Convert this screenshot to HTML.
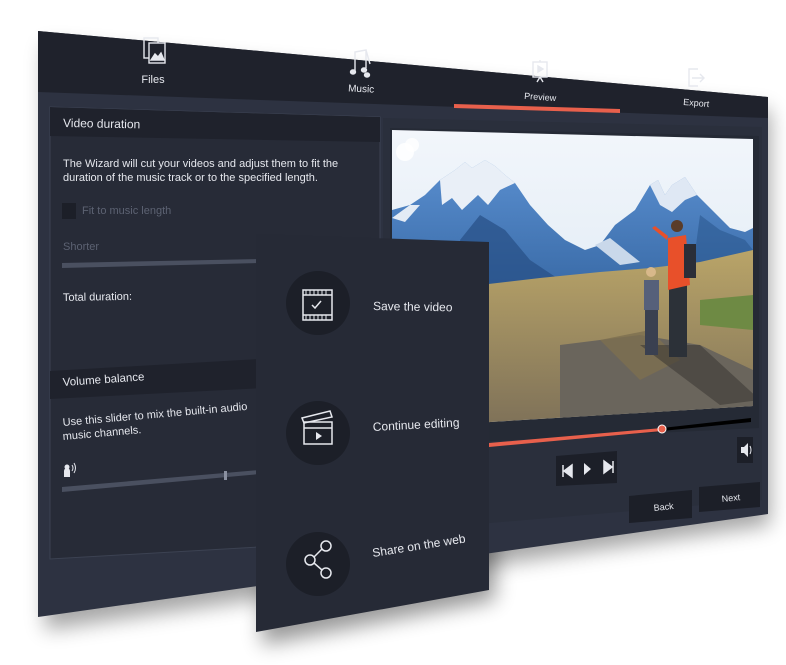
<!DOCTYPE html>
<html><head><meta charset="utf-8"><style>
html,body{margin:0;padding:0;background:#fff;width:786px;height:665px;overflow:hidden}
svg{display:block}
text{font-family:"Liberation Sans",sans-serif;fill:#e6e8ee}
</style></head><body>
<svg width="786" height="665" viewBox="0 0 786 665" xmlns="http://www.w3.org/2000/svg">
<defs>
<filter id="sh" x="-20%" y="-20%" width="140%" height="150%"><feGaussianBlur stdDeviation="10"/></filter>
<linearGradient id="sky" x1="0" y1="0" x2="0" y2="1"><stop offset="0" stop-color="#f2f6fb"/><stop offset="1" stop-color="#d8e6f2"/></linearGradient>
<linearGradient id="mt" x1="0" y1="0" x2="0" y2="1"><stop offset="0" stop-color="#5a8fd0"/><stop offset="1" stop-color="#2f5f9a"/></linearGradient>
<linearGradient id="gr" x1="0" y1="0" x2="0" y2="1"><stop offset="0" stop-color="#b9a468"/><stop offset="1" stop-color="#7d7058"/></linearGradient>
<clipPath id="img"><polygon points="392,130 753,139 753,406 392,428"/></clipPath>
<clipPath id="leftp"><polygon points="50,107 380,117 380,600 50,600"/></clipPath>
</defs>
<polygon points="45,45 770,110 770,525 45,630" fill="#000" opacity="0.35" filter="url(#sh)"/>
<polygon points="262,250 495,255 495,600 262,645" fill="#000" opacity="0.4" filter="url(#sh)"/>
<polygon points="38,31 768,97 768,514 38,617" fill="#2d3241"/>
<polygon points="38,31 768,97 768,118 38,92" fill="#1f222c"/>
<polygon points="454,104 620,109 620,113 454,108" fill="#e8604c"/>
<g fill="none" stroke="#e6e8ee" stroke-width="1.4">
<rect x="144" y="38" width="14" height="20"/><rect x="149" y="43" width="16" height="20" fill="#1f222c"/>
<path d="M151 60 l4-6 3 3 3-4 3 7z" fill="#e6e8ee"/>
<path d="M355 72 V52 l11-2 v18 M366 50 l4 14"/>
<ellipse cx="353" cy="72" rx="2.5" ry="2" fill="#e6e8ee"/><ellipse cx="364" cy="70" rx="2.5" ry="2" fill="#e6e8ee"/><ellipse cx="367" cy="75" rx="2.5" ry="2" fill="#e6e8ee"/>
<rect x="533" y="62" width="14" height="15"/><path d="M538 66 l5 3 -5 3z M540 77 l-3 5 M540 77 l3 5 M540 60 v2" fill="#e6e8ee"/>
<path d="M698 86 h-9 v-17 h9 M692 78 h12 M700 74 l4 4 -4 4"/>
</g>
<text x="153" y="83" font-size="11" text-anchor="middle">Files</text>
<text x="361" y="92" font-size="10" text-anchor="middle" transform="rotate(3 361 92)">Music</text>
<text x="540" y="100" font-size="9" text-anchor="middle" transform="rotate(4 540 100)">Preview</text>
<text x="696" y="106" font-size="9" text-anchor="middle" transform="rotate(5 696 106)">Export</text>
<polygon points="50,107 380,117 380,540 50,559" fill="#272b37" stroke="#3c4252" stroke-width="1"/>
<g clip-path="url(#leftp)">
<polygon points="50,107 380,117 380,142 50,136" fill="#1f222c"/>
<polygon points="50,371 380,352 380,382 50,399" fill="#1f222c"/>
</g>
<text x="63" y="127" font-size="12" transform="rotate(1 63 127)">Video duration</text>
<text x="63" y="167" font-size="11">The Wizard will cut your videos and adjust them to fit the</text>
<text x="63" y="181" font-size="11">duration of the music track or to the specified length.</text>
<rect x="62" y="203" width="14" height="16" fill="#1c1f28"/>
<text x="82" y="214" font-size="11" style="fill:#5c6272">Fit to music length</text>
<text x="63" y="250" font-size="11" style="fill:#5c6272">Shorter</text>
<polygon points="62,263 260,259 260,263 62,268" fill="#4a5060"/>
<text x="63" y="301" font-size="11" transform="rotate(-1 63 301)">Total duration:</text>
<text x="63" y="386" font-size="11.5" transform="rotate(-4 63 386)">Volume balance</text>
<text x="63" y="426" font-size="11" transform="rotate(-5 63 426)">Use this slider to mix the built-in audio</text>
<text x="63" y="440" font-size="11" transform="rotate(-5 63 440)">music channels.</text>
<path d="M64 477 v-6 a3 3 0 0 1 6 0 v6z" fill="#e6e8ee"/><circle cx="67" cy="467" r="2.5" fill="#e6e8ee"/>
<path d="M72 465 q2 3 0 6 M74 463 q3 5 0 10" fill="none" stroke="#e6e8ee" stroke-width="1"/>
<polygon points="62,487 260,470 260,474 62,492" fill="#4a5060"/>
<rect x="224" y="471" width="3" height="9" fill="#8a90a0"/>
<polygon points="383,118 762,127 762,500 383,532" fill="#2a2f3c"/>
<polygon points="390,128 759,136 759,428 390,446" fill="#252a35"/>
<g clip-path="url(#img)">
<rect x="392" y="128" width="362" height="300" fill="url(#sky)"/>
<circle cx="405" cy="152" r="9" fill="#fff" opacity="0.85"/><circle cx="412" cy="145" r="7" fill="#fff" opacity="0.8"/>
<polygon points="392,210 410,205 425,195 440,180 455,170 465,162 472,168 485,160 495,166 505,175 515,183 530,205 548,225 565,240 585,250 600,245 615,225 635,210 650,185 658,180 665,195 672,185 685,177 697,195 712,210 730,228 745,232 753,228 753,330 392,330" fill="url(#mt)"/>
<polygon points="440,180 455,170 465,162 472,168 485,160 495,166 505,175 515,183 500,190 488,205 478,195 462,210 452,198 442,205" fill="#e9eff7"/>
<polygon points="392,218 410,205 420,205 405,222" fill="#e3ebf5"/>
<polygon points="650,185 658,180 665,195 672,185 685,177 697,195 685,200 672,212 660,205" fill="#dfe8f4"/>
<polygon points="595,245 610,238 625,250 640,262 620,265" fill="#c9d8ea"/>
<polygon points="460,240 480,215 505,230 530,260 560,280 470,290" fill="#274f85" opacity="0.7"/>
<polygon points="700,215 720,230 745,240 753,250 753,300 690,290" fill="#2c5890" opacity="0.6"/>
<polygon points="392,300 440,292 480,285 540,278 600,272 650,268 700,262 753,250 753,410 392,430" fill="url(#gr)"/>
<polygon points="392,300 460,292 480,320 420,340 392,345" fill="#9a8a5a" opacity="0.6"/>
<polygon points="700,300 753,295 753,330 700,325" fill="#6e8a44"/>
<polygon points="560,345 640,335 700,345 753,370 753,410 560,425" fill="#6a655c"/>
<polygon points="600,340 650,330 680,360 640,380" fill="#7d6f50" opacity="0.8"/>
<polygon points="640,345 700,345 760,400 720,405" fill="#3d3a36" opacity="0.6"/>
<rect x="669" y="275" width="18" height="82" fill="#2c3138"/>
<polygon points="668,238 686,235 690,285 668,290" fill="#e8502a"/>
<polygon points="667,240 652,228 655,226 668,236" fill="#e8502a"/>
<circle cx="677" cy="226" r="6" fill="#5a3c28"/>
<rect x="684" y="244" width="12" height="34" fill="#2a2e38"/>
<rect x="645" y="305" width="13" height="50" fill="#3a4050"/>
<rect x="644" y="280" width="15" height="30" fill="#56607a"/>
<circle cx="651" cy="272" r="5" fill="#d8b88a"/>
</g>
<polygon points="489,443 662,428 662,431 489,447" fill="#e8604c"/>
<polygon points="662,428 751,418 751,422 662,431" fill="#000"/>
<circle cx="662" cy="429" r="4" fill="#e8604c" stroke="#fff" stroke-width="1"/>
<rect x="737" y="437" width="16" height="26" fill="#1c1f28"/>
<path d="M741 447 h3 l4-4 v14 l-4-4 h-3z" fill="#e6e8ee"/>
<path d="M750 446 q2 4 0 8" fill="none" stroke="#e6e8ee" stroke-width="1"/>
<polygon points="556,456 617,451 617,483 556,486" fill="#1c1f28"/>
<path d="M563 465 v12 M572 465 l-8 6 8 6z" fill="#e6e8ee" stroke="#e6e8ee" stroke-width="1.5"/>
<path d="M584 463 l7 6 -7 6z" fill="#e6e8ee"/>
<path d="M604 461 l8 6 -8 6z M613 461 v12" fill="#e6e8ee" stroke="#e6e8ee" stroke-width="1.5"/>
<polygon points="629,496 692,490 692,518 629,523" fill="#1c1f28"/>
<polygon points="699,487 760,482 760,507 699,512" fill="#1c1f28"/>
<text x="654" y="511" font-size="9" transform="rotate(-6 654 511)">Back</text>
<text x="722" y="502" font-size="9" transform="rotate(-6 722 502)">Next</text>
<polygon points="256,234 489,242 489,590 256,632" fill="#262a36"/>
<circle cx="318" cy="303" r="32" fill="#1c1f28"/>
<circle cx="318" cy="433" r="32" fill="#1c1f28"/>
<circle cx="318" cy="564" r="32" fill="#1c1f28"/>
<g fill="none" stroke="#e6e8ee" stroke-width="1.5">
<rect x="303" y="290" width="29" height="30"/><path d="M303 295 h29 M303 315 h29 M312 305 l3 3 6-7"/>
<path d="M306 290 v5 M310 290 v5 M314 290 v5 M318 290 v5 M322 290 v5 M326 290 v5 M306 315 v5 M310 315 v5 M314 315 v5 M318 315 v5 M322 315 v5 M326 315 v5" stroke-width="1"/>
<rect x="304" y="422" width="28" height="22"/><path d="M304 428 h28 M302 418 l28-7 2 6 -28 6z"/>
<circle cx="326" cy="546" r="5"/><circle cx="310" cy="560" r="5"/><circle cx="326" cy="573" r="5"/><path d="M314 557 l8-8 M314 563 l8 7"/>
</g>
<path d="M316 432 l6 4 -6 4z" fill="#e6e8ee"/>
<text x="373" y="310" font-size="12" transform="rotate(1 373 310)">Save the video</text>
<text x="373" y="431" font-size="12" transform="rotate(-3 373 431)">Continue editing</text>
<text x="373" y="557" font-size="12" transform="rotate(-9 373 557)">Share on the web</text>
</svg>
</body></html>
